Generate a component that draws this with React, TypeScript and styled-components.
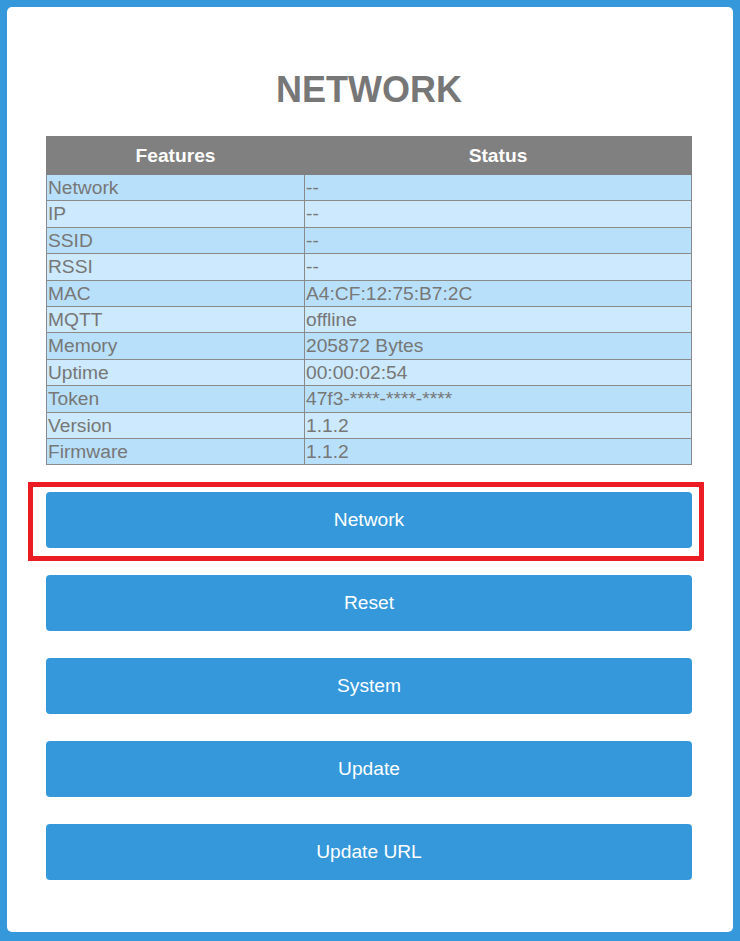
import React from "react";
import styled, { createGlobalStyle } from "styled-components";

const GlobalStyle = createGlobalStyle`
  html, body {
    margin: 0;
    padding: 0;
    background: #3498db;
    font-family: "Liberation Sans", Arial, sans-serif;
  }
`;

const Page = styled.div`
  padding: 7px 7px 9px 7px;
`;

const Card = styled.div`
  background: #ffffff;
  border-radius: 5px;
  height: 925px;
  box-sizing: border-box;
  padding: 62px 41px 0 39px;
  display: flex;
  flex-direction: column;
`;

const Title = styled.h1`
  margin: 0 0 26px 0;
  font-size: 36px;
  line-height: 41px;
  font-weight: bold;
  color: #777777;
  text-align: center;
`;

const Table = styled.table`
  width: 100%;
  border-collapse: collapse;
  font-size: 19.2px;
`;

const HeadCell = styled.th<{ $w: string }>`
  background: #808080;
  color: #ffffff;
  font-weight: bold;
  height: 37px;
  padding: 0;
  border: 1px solid #808080;
  text-align: center;
  width: ${(p) => p.$w};
`;

const Row = styled.tr<{ $dark: boolean }>`
  background: ${(p) => (p.$dark ? "#b9e0fb" : "#cce9fd")};
`;

const Cell = styled.td`
  border: 1px solid #8a8a8a;
  color: #777777;
  padding: 0 1px;
  height: 25.4px;
  line-height: 25.4px;
  text-align: left;
  white-space: nowrap;
`;

const Buttons = styled.div`
  display: flex;
  flex-direction: column;
  gap: 27px;
  margin-top: 27px;
`;

const Slot = styled.div`
  position: relative;
`;

const Highlight = styled.div`
  position: absolute;
  left: -18px;
  right: -12px;
  top: -10px;
  bottom: -13px;
  border: 5px solid #ec1c24;
  pointer-events: none;
`;

const Button = styled.button`
  display: block;
  width: 100%;
  height: 56px;
  border: none;
  border-radius: 4px;
  background: #3498db;
  color: #ffffff;
  font-family: "Liberation Sans", Arial, sans-serif;
  font-size: 19.2px;
  cursor: pointer;
`;

const rows: [string, string][] = [
  ["Network", "--"],
  ["IP", "--"],
  ["SSID", "--"],
  ["RSSI", "--"],
  ["MAC", "A4:CF:12:75:B7:2C"],
  ["MQTT", "offline"],
  ["Memory", "205872 Bytes"],
  ["Uptime", "00:00:02:54"],
  ["Token", "47f3-****-****-****"],
  ["Version", "1.1.2"],
  ["Firmware", "1.1.2"],
];

const buttons = ["Network", "Reset", "System", "Update", "Update URL"];

export default function App() {
  return (
    <>
      <GlobalStyle />
      <Page>
        <Card>
          <Title>NETWORK</Title>
          <Table>
            <thead>
              <tr>
                <HeadCell $w="40%">Features</HeadCell>
                <HeadCell $w="60%">Status</HeadCell>
              </tr>
            </thead>
            <tbody>
              {rows.map(([k, v], i) => (
                <Row key={k} $dark={i % 2 === 0}>
                  <Cell>{k}</Cell>
                  <Cell>{v}</Cell>
                </Row>
              ))}
            </tbody>
          </Table>
          <Buttons>
            {buttons.map((b, i) => (
              <Slot key={b}>
                <Button>{b}</Button>
                {i === 0 && <Highlight />}
              </Slot>
            ))}
          </Buttons>
        </Card>
      </Page>
    </>
  );
}
